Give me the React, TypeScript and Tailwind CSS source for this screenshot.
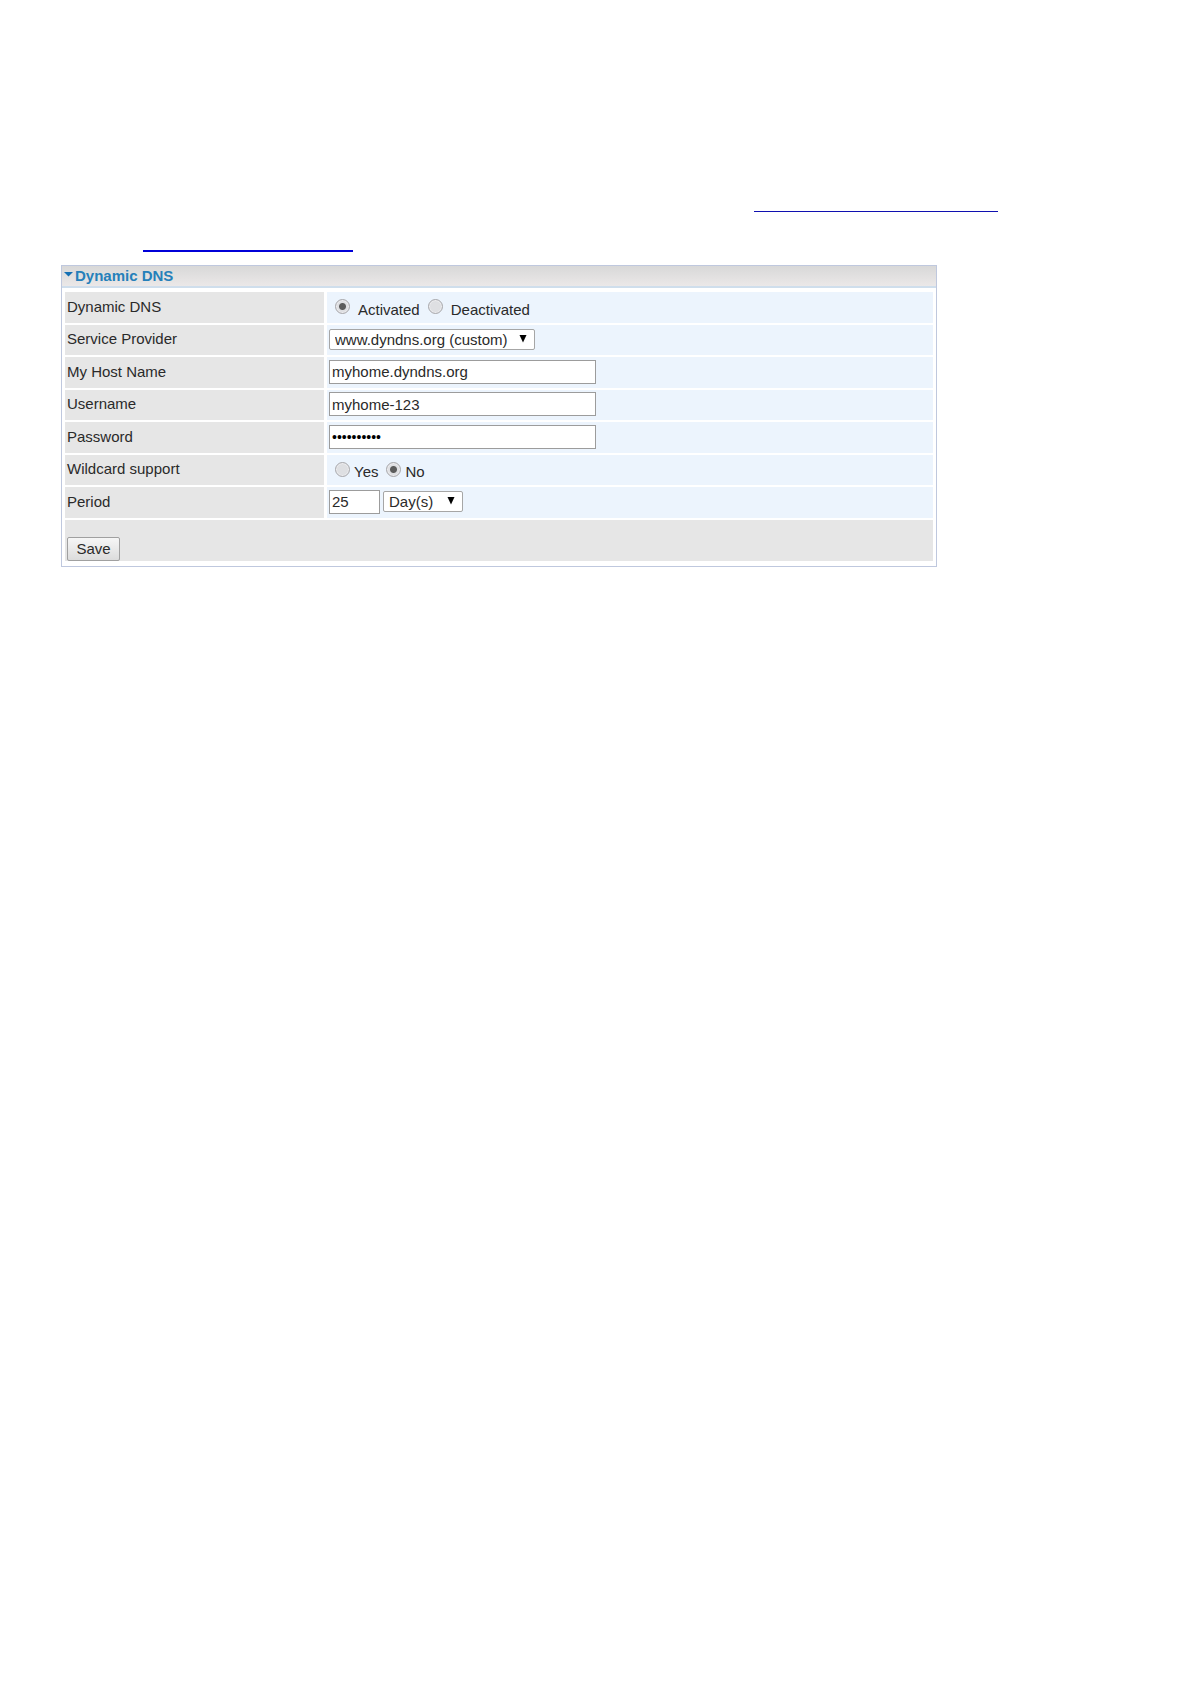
import { FC, ReactNode } from 'react'

interface RowProps {
  label: string
  htmlFor?: string
  children: ReactNode
}

const Row: FC<RowProps> = ({ label, htmlFor, children }) => (
  <tr className="odd:h-[31px] even:h-[30px]">
    <th
      scope="row"
      className="w-[259px] bg-[#e6e6e6] p-0 pb-0.5 pl-0.5 text-left align-middle font-normal"
    >
      {htmlFor ? <label htmlFor={htmlFor}>{label}</label> : label}
    </th>
    <td className="bg-[#ecf4fd] p-0 pb-0.5 pl-0.5 align-middle">
      <div className="flex items-center">{children}</div>
    </td>
  </tr>
)

interface RadioProps {
  name: string
  label: string
  className: string
  defaultChecked?: boolean
}

const Radio: FC<RadioProps> = ({ name, label, className, defaultChecked }) => (
  <label className={`flex items-center ${className}`}>
    <input
      type="radio"
      name={name}
      defaultChecked={defaultChecked}
      className="size-[15px] shrink-0 appearance-none rounded-full border border-[#a8a8ac] bg-[#dedfe2] shadow-[inset_0_0_0_1px_#ececee] checked:bg-[radial-gradient(circle,#5c5c5c_3px,#dedfe2_4px)]"
    />
    <span className="pt-1.5">{label}</span>
  </label>
)

interface SelectProps {
  id: string
  option: string
  className: string
  ariaLabel?: string
}

const Select: FC<SelectProps> = ({ id, option, className, ariaLabel }) => (
  <div className={`relative h-[21px] ${className}`}>
    <select
      id={id}
      aria-label={ariaLabel}
      className="block h-full w-full appearance-none rounded-xs border border-[#a6a6a6] bg-white pl-[5px] leading-5"
    >
      <option>{option}</option>
    </select>
    <svg
      viewBox="0 0 8 8"
      className="pointer-events-none absolute top-1.5 right-2 size-2 fill-black"
    >
      <path d="M0.500 0h7L4 7.500z" />
    </svg>
  </div>
)

const inputClass =
  'block h-6 border border-[#9c9c9c] bg-white px-0.5 leading-5 rounded-none'

export default function App() {
  return (
    <main className="min-h-screen bg-white px-[61px] pt-[172px] font-['Liberation_Sans',Arial,sans-serif] text-[15px] leading-5 text-[#2a2a2a]">
      <div className="flex h-10 items-end pl-[693px]">
        <a href="#" className="w-[244px] border-b border-[#1010b0]" />
      </div>
      <div className="flex h-10 items-end pl-[82px]">
        <a href="#" className="w-[210px] border-b-2 border-[#0000d8]" />
      </div>

      <form
        className="mt-[13px] max-w-[876px] border border-[#bfc8de]"
        onSubmit={(e) => e.preventDefault()}
      >
        <h1 className="flex h-[22px] items-center gap-0.5 border-b-2 border-[#cfdeec] bg-linear-to-b from-[#d8d8d8] to-[#ebe8e8] pl-0.5 font-bold text-[#2580ba]">
          <svg viewBox="0 0 9 9" className="size-[9px] fill-[#1470b4]">
            <path d="M0 0h9L4.500 4.500z" />
          </svg>
          Dynamic DNS
        </h1>

        <table className="mt-0.5 w-full table-fixed border-separate border-spacing-x-[3px] border-spacing-y-0.5">
          <colgroup>
            <col className="w-[259px]" />
            <col />
          </colgroup>
          <tbody>
            <Row label="Dynamic DNS">
              <Radio
                name="ddns"
                label="Activated"
                className="ml-1.5 gap-2"
                defaultChecked
              />
              <Radio
                name="ddns"
                label="Deactivated"
                className="ml-2 gap-2"
              />
            </Row>
            <Row label="Service Provider" htmlFor="provider">
              <Select
                id="provider"
                option="www.dyndns.org (custom)"
                className="w-[206px]"
              />
            </Row>
            <Row label="My Host Name" htmlFor="host">
              <input
                id="host"
                type="text"
                defaultValue="myhome.dyndns.org"
                className={`w-[267px] ${inputClass}`}
              />
            </Row>
            <Row label="Username" htmlFor="username">
              <input
                id="username"
                type="text"
                defaultValue="myhome-123"
                className={`w-[267px] ${inputClass}`}
              />
            </Row>
            <Row label="Password" htmlFor="password">
              <input
                id="password"
                type="password"
                defaultValue="myhome1234"
                className={`w-[267px] text-sm text-black ${inputClass}`}
              />
            </Row>
            <Row label="Wildcard support">
              <Radio name="wildcard" label="Yes" className="ml-1.5 gap-1" />
              <Radio
                name="wildcard"
                label="No"
                className="ml-2 gap-1"
                defaultChecked
              />
            </Row>
            <Row label="Period" htmlFor="period">
              <input
                id="period"
                type="text"
                defaultValue="25"
                className={`w-[51px] ${inputClass}`}
              />
              <Select
                id="unit"
                option="Day(s)"
                className="ml-[3px] w-20"
                ariaLabel="Day(s)"
              />
            </Row>
          </tbody>
        </table>

        <div className="mx-[3px] mb-[5px] flex h-[41px] items-end bg-[#e6e6e6] pl-0.5">
          <button
            type="submit"
            className="h-6 w-[53px] rounded-xs border border-[#a0a0a0] bg-linear-to-b from-[#f6f6f6] to-[#dcdcdc]"
          >
            Save
          </button>
        </div>
      </form>
    </main>
  )
}
